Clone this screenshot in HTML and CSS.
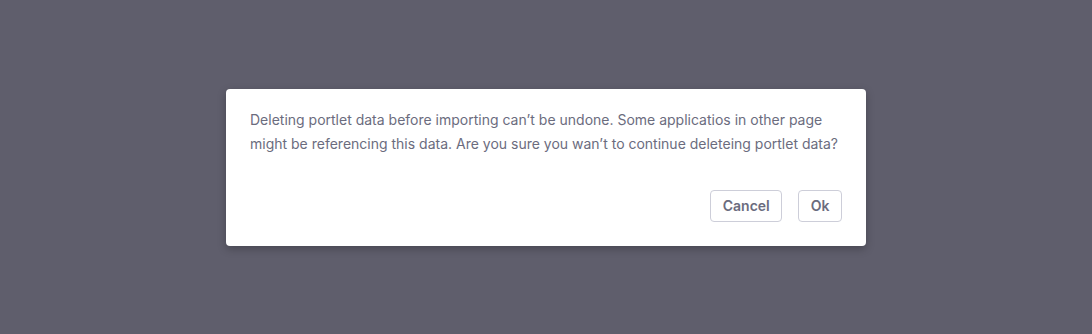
FILE: index.html
```html
<!DOCTYPE html>
<html lang="en">
<head>
<meta charset="utf-8">
<title>Confirm</title>
<link rel="stylesheet" href="styles.css">
</head>
<body>
<div class="backdrop">
  <div class="dialog" role="dialog">
    <div class="dialog-body">
      <p class="message">Deleting portlet data before importing can’t be undone. Some applicatios in other page might be referencing this data. Are you sure you wan’t to continue deleteing portlet data?</p>
    </div>
    <div class="dialog-footer">
      <button class="btn">Cancel</button>
      <button class="btn">Ok</button>
    </div>
  </div>
</div>
</body>
</html>
```
FILE: styles.css
```css
* { box-sizing: border-box; }
html, body {
  margin: 0;
  padding: 0;
  height: 100%;
}
body {
  background: #5f5e6c;
  font-family: Inter, "Noto Sans", "Liberation Sans", sans-serif;
  color: #6b6c7e;
}
.backdrop {
  height: 100%;
  display: flex;
  align-items: center;
  justify-content: center;
}
.dialog {
  width: 640px;
  background: #ffffff;
  border-radius: 4px;
  box-shadow: 0 3px 8px rgba(0, 0, 0, 0.25);
}
.dialog-body {
  padding: 19px 24px 0;
}
.message {
  margin: 0;
  font-size: 14px;
  line-height: 24px;
}
.dialog-footer {
  display: flex;
  justify-content: flex-end;
  gap: 16px;
  padding: 34px 24px 24px;
}
.btn {
  height: 32px;
  padding: 0 11.5px;
  border: 1px solid #cdced9;
  border-radius: 4px;
  background: #ffffff;
  color: #6b6c7e;
  font-family: inherit;
  font-size: 14px;
  font-weight: 600;
  line-height: 1;
  cursor: pointer;
}
```
